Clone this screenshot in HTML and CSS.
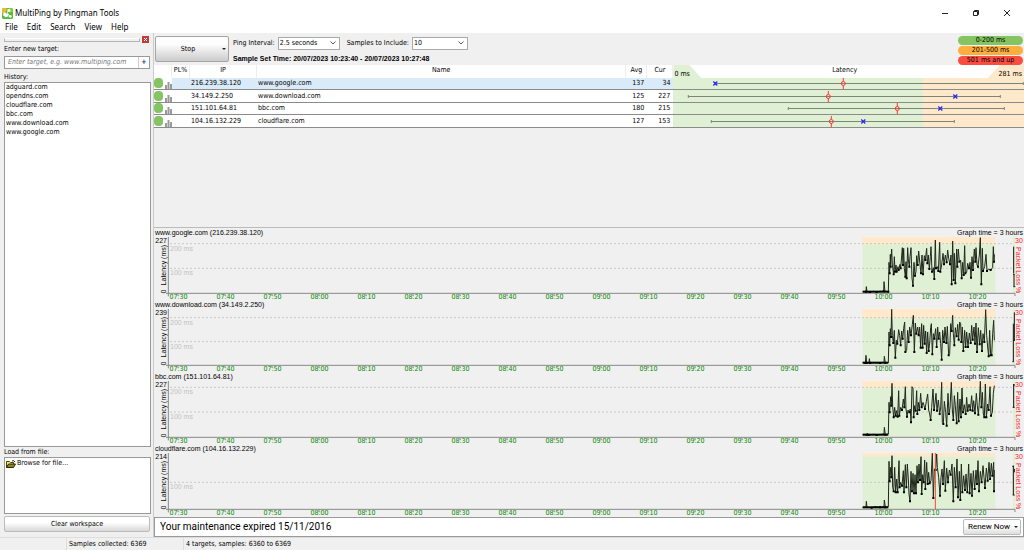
FILE: index.html
```html
<!DOCTYPE html>
<html lang="en">
<head>
<meta charset="utf-8">
<title>MultiPing by Pingman Tools</title>
<link rel="stylesheet" href="styles.css">
</head>
<body>
<div class="app">
  <header class="titlebar">
    <svg class="logo" viewBox="0 0 12 12">
      <rect x="0" y="0" width="12" height="12" rx="2" fill="#56bb3c"/>
      <path d="M0 2a2 2 0 0 1 2-2h3v3L2 6H0z" fill="#f2b632"/>
      <path d="M7 0h3a2 2 0 0 1 2 2v3H8z" fill="#7fd02f"/>
      <path d="M6 1h3v3H6zM1 8l1-3h2l1 2 2-1v3l-3 1z" fill="#fff"/>
      <path d="M4 9l2-4 1-2M6 6l3 3" fill="none" stroke="#fff"/>
      <circle cx="9" cy="9" r="1.500" fill="#fff"/>
    </svg>
    <h1 class="title">MultiPing by Pingman Tools</h1>
    <div class="window-buttons">
      <button aria-label="Minimize"><svg viewBox="0 0 8 8"><path d="M1 4.500h6"/></svg></button>
      <button aria-label="Restore"><svg viewBox="0 0 8 8"><path d="M1.500 2.500h4v4h-4zM2.500 2.500v-1h4v4h-1"/></svg></button>
      <button aria-label="Close"><svg viewBox="0 0 8 8"><path d="M1 1l6 6M7 1L1 7"/></svg></button>
    </div>
  </header>
  <nav class="menu">
    <button>File</button><button>Edit</button><button>Search</button><button>View</button><button>Help</button>
  </nav>

  <div class="body">
    <aside class="side">
      <div class="grip"><span class="grip-bar"></span><button class="grip-close" aria-label="Close panel"><svg viewBox="0 0 7 7"><path d="M2 2l3 3M5 2L2 5"/></svg></button></div>
      <label class="side-label" for="target">Enter new target:</label>
      <div class="target"><input id="target" type="text" placeholder="Enter target, e.g. www.multiping.com"><button aria-label="Add target">+</button></div>
      <h2 class="side-label history-label">History:</h2>
      <ul class="list history">
        <li>adguard.com</li><li>opendns.com</li><li>cloudflare.com</li><li>bbc.com</li><li>www.download.com</li><li>www.google.com</li>
      </ul>
      <h2 class="side-label">Load from file:</h2>
      <div class="list files">
        <button class="browse"><svg viewBox="0 0 10 8"><path d="M.5 7.500v-6h3l1 1h3v2" fill="#f3ea7a" stroke="#4a4300"/><path d="M.5 7.500l2-3.500h7l-2 3.500z" fill="#8c8420" stroke="#2c2800"/><path d="M6 1q2-1.200 3 1" fill="none" stroke="#222"/></svg>Browse for file...</button>
      </div>
      <button class="clear">Clear workspace</button>
    </aside>

    <main class="main">
      <section class="toolbar">
        <button class="stop"><span class="stop-text">Stop</span><span class="arrow"></span></button>
        <div class="settings">
          <div class="fields">
            <label for="interval">Ping Interval:</label>
            <span class="select interval"><select id="interval"><option>2.5 seconds</option></select><svg viewBox="0 0 6 4"><path d="M.5.5L3 3 5.500.5"/></svg></span>
            <label for="samples">Samples to Include:</label>
            <span class="select samples"><select id="samples"><option>10</option></select><svg viewBox="0 0 6 4"><path d="M.5.5L3 3 5.500.5"/></svg></span>
          </div>
          <p class="set-time">Sample Set Time: 20/07/2023 10:23:40 - 20/07/2023 10:27:48</p>
        </div>
        <ul class="legend"><li class="good">0-200 ms</li><li class="warn">201-500 ms</li><li class="bad">501 ms and up</li></ul>
      </section>

      <table class="targets">
        <colgroup><col class="c-icon"><col class="c-pl"><col class="c-ip"><col class="c-name"><col class="c-avg"><col class="c-cur"><col class="c-lat"></colgroup>
        <thead><tr><th></th><th>PL%</th><th>IP</th><th>Name</th><th>Avg</th><th>Cur</th>
          <th class="lat"><div class="lat-head"><span class="lat-min">0 ms</span><span>Latency</span><span class="lat-max">281 ms</span></div></th></tr></thead>
        <tbody id="rows"></tbody>
      </table>

      <div class="gap"></div>
      <section class="charts" id="charts"></section>

      <footer class="notice"><span>Your maintenance expired 15/11/2016</span><button class="renew">Renew Now<span class="arrow"></span></button></footer>
    </main>
  </div>
  <footer class="status"><span class="s1"></span><span class="s2">Samples collected: 6369</span><span class="s3">4 targets, samples: 6360 to 6369</span></footer>
</div>
<script src="app.js"></script>
</body>
</html>
```
FILE: styles.css
```css
* { box-sizing: border-box; margin: 0; padding: 0; }
body { font: 7px/9px "DejaVu Sans Condensed", "DejaVu Sans", sans-serif; color: #000; }
button, input, select { font: inherit; color: inherit; border: 0; background: none; }
ul { list-style: none; }
svg { display: block; }
.app { display: flex; flex-direction: column; height: 100vh; background: #f0f0f0; overflow: hidden; }

.titlebar { display: flex; align-items: center; height: 21px; padding: 5px 2px 0 2px; background: #fff; }
.logo { width: 11px; height: 11px; margin-right: 2px; }
.title { font: 8px/12px "Noto Sans", sans-serif; flex: 1; }
.window-buttons { display: flex; }
.window-buttons button { width: 31px; display: grid; place-items: center; }
.window-buttons svg { width: 8px; height: 8px; fill: none; stroke: #222; }
.menu { display: flex; gap: 9px; height: 12px; padding-left: 5px; background: #fff; font: 8px/12px "Noto Sans", sans-serif; }

.body { display: flex; flex: 1; min-height: 0; }
.side { width: 153px; padding: 3px 2px 5px 4px; display: flex; flex-direction: column; }
.grip { display: flex; align-items: center; justify-content: space-between; height: 7px; }
.grip-bar { width: 136px; height: 4px; border: 1px solid #b4b4b4; border-top-color: #fff; }
.grip-close { width: 7px; height: 7px; background: #c33c3c; margin-right: 2px; }
.grip-close svg { stroke: #fff; }
.side-label { font-size: 7px; font-weight: normal; line-height: 9px; margin-top: 1px; }
.side > label { margin-top: 2px; }
.target { display: flex; margin-top: 2px; height: 13px; background: #fff; border: 1px solid #999; width: 146px; }
.target input { flex: 1; min-width: 0; padding-left: 3px; font-style: italic; outline: 0; }
.target input::placeholder { color: #777; opacity: 1; }
.target button { width: 11px; border-left: 1px solid #ccc; color: #223a66; font-weight: bold; }
.history-label { margin-top: 4px; }
.list { background: #fff; border: 1px solid #999; width: 147px; padding: 0 1px; }
.history { flex: 1; line-height: 9px; }
.files { height: 57px; padding-top: 1px; }
.browse { display: flex; align-items: center; gap: 1px; height: 9px; }
.browse svg { width: 10px; height: 8px; }
.clear { width: 146px; height: 16px; margin-top: 2px; border: 1px solid #bbb; border-radius: 2px; background: linear-gradient(#fff 40%, #d8d8d8); }

.main { flex: 1; min-width: 0; display: flex; flex-direction: column; border-left: 1px solid #ccc; }
.toolbar { display: flex; height: 32px; padding: 3px 1px 0 1px; }
.stop { display: flex; align-items: center; width: 74px; height: 26px; border: 1px solid #a5a5a5; border-radius: 2px; background: linear-gradient(#fdfdfd 30%, #cbcbcb); }
.stop-text { flex: 1; }
.arrow { border: 2px solid transparent; border-top-color: #222; border-bottom: 0; margin: 0 2px; }
.settings { padding-left: 4px; flex: 1; }
.fields { display: flex; align-items: center; height: 14px; }
.select { display: flex; align-items: center; height: 13px; background: #fff; border: 1px solid #aaa; }
.select select { flex: 1; appearance: none; outline: 0; padding-left: 1px; }
.select svg { width: 6px; height: 4px; fill: none; stroke: #555; margin-right: 3px; }
.interval { width: 62px; margin: 0 7px 0 3px; }
.samples { width: 56px; margin-left: 3px; }
.set-time { font: bold 7px/9px "Liberation Sans", sans-serif; margin-top: 4px; }
.legend { width: 65px; display: grid; gap: 1px; text-align: center; align-content: start; }
.legend li { height: 9px; border-radius: 5px; }
.good { background: #84c561; }
.warn { background: #ffae3d; }
.bad { background: #f94d41; }

.targets { width: 100%; table-layout: fixed; border-collapse: separate; border-spacing: 0; background: #fff; }
.c-icon { width: 18px; } .c-pl { width: 18px; } .c-ip { width: 67px; } .c-avg { width: 21px; } .c-cur { width: 26px; } .c-lat { width: 40.300%; }
.targets th { font-weight: normal; height: 13px; line-height: 10px; vertical-align: top; border-right: 1px solid #eee; }
.targets .lat { border: 0; }
.lat-head { display: flex; justify-content: space-between; height: 13px; }
.lat-min, .lat-max { padding-top: 4px; width: 28px; }
.lat-min { background: #dff0d3; clip-path: polygon(0 0, 16px 0, 100% 100%, 0 100%); text-align: left; padding-left: 1px; }
.lat-max { background: #ffe9ca; width: 36px; text-align: right; padding-right: 2px; clip-path: polygon(12px 0, 100% 0, 100% 100%, 0 100%); }
.targets td { height: 12px; line-height: 11px; border-bottom: 1px solid #8b8b8b; white-space: nowrap; }
.targets tr:nth-child(even) td { height: 13px; }
.targets .num { text-align: right; padding-right: 3px; }
.targets .ip, .targets .name { padding-left: 1px; }
.selected td:not(:first-child) { background: #d9eaf8; }
.targets td.range, .targets .selected td.range { background: linear-gradient(90deg, #dff0d5 71.200%, #ffe9ca 71.200%); }
.range svg { width: 100%; height: 11px; }
.icons svg { width: 18px; height: 11px; }

.gap { flex: 1; }
.charts { border-top: 1px solid #bbb; height: 290px; padding: 1px 0 2px; display: flex; flex-direction: column; }
.chart { flex: 1; display: grid; grid-template: 8px 57px 1fr / 14px 1fr 9px; font-family: "Liberation Sans", sans-serif; }
.chart-head { grid-column: 1 / 4; display: flex; justify-content: space-between; line-height: 8px; padding: 0 1px; }
.axis-side { position: relative; }
.axis-side .max { position: absolute; top: 0; right: 1px; line-height: 7px; }
.y-axis { position: absolute; left: 6px; bottom: 1px; display: flex; gap: 4px; writing-mode: vertical-rl; transform: rotate(180deg); line-height: 7px; white-space: nowrap; }
.loss { color: #f22; }
.loss .pct { writing-mode: vertical-rl; line-height: 7px; margin-top: 3px; white-space: nowrap; }
.loss .cap { display: block; line-height: 7px; }
.plot { position: relative; }
.plot > svg { width: 100%; height: 57px; overflow: visible; }
.plot .tick-label { position: absolute; left: 2px; color: #c2c2c2; line-height: 8px; }
.plot path, .plot line { vector-effect: non-scaling-stroke; }
.times { grid-column: 2; display: flex; color: #008a00; font-family: "DejaVu Sans Condensed", sans-serif; line-height: 7px; padding-right: 14px; margin-left: -13px; }
.times span { flex: 1 1 0; text-align: center; }

.notice { display: flex; align-items: center; justify-content: space-between; height: 20px; background: #fff; border: 1px solid #999; padding: 0 2px 0 5px; font: 10px/14px Roboto, sans-serif; }
.renew { display: flex; align-items: center; justify-content: space-between; width: 58px; height: 16px; padding-left: 4px; font-size: 8px; white-space: nowrap; border: 1px solid #bbb; border-radius: 2px; background: linear-gradient(#fff 40%, #ddd); }
.status { display: flex; height: 13px; line-height: 12px; border-top: 1px solid #ddd; }
.status span { border-right: 1px solid #ddd; padding-left: 2px; }
.s1 { width: 67px; } .s2 { width: 117px; }
.status .s3 { border: 0; padding-left: 2px; }
```
FILE: app.js
```js
const targets = [
  { ip: "216.239.38.120", name: "www.google.com", avg: 137, cur: 34, range: [42, 350], mean: 170, last: 42 },
  { ip: "34.149.2.250", name: "www.download.com", avg: 125, cur: 227, range: [15, 327], mean: 155, last: 282 },
  { ip: "151.101.64.81", name: "bbc.com", avg: 180, cur: 215, range: [115, 331], mean: 224, last: 267 },
  { ip: "104.16.132.229", name: "cloudflare.com", avg: 127, cur: 153, range: [38, 281], mean: 158, last: 190 }
];

const icons = `<svg viewBox="0 0 18 11"><rect x="0" y="0" width="9" height="10" rx="4" fill="#84c561"/><path d="M12 11V7M14.500 11V4M17 11V6" stroke="#999" stroke-width="2"/></svg>`;

document.getElementById("rows").innerHTML = targets.map((t, i) => `
  <tr class="${i ? "" : "selected"}"><td class="icons">${icons}</td><td></td><td class="ip">${t.ip}</td><td class="name">${t.name}</td>
  <td class="num">${t.avg}</td><td class="num">${t.cur}</td>
  <td class="range"><svg viewBox="0 0 350 11" fill="none">
    <path d="M${t.range[0]} 5.500H${t.range[1]}M${t.range[0]} 4v3M${t.range[1]} 4v3" stroke="#7d8577"/>
    <path d="M${t.mean} 0v3.500M${t.mean} 7.500V11" stroke="#f33"/><circle cx="${t.mean}" cy="5.500" r="2" stroke="#f33"/>
    <path d="M${t.last - 2} 3.500l4 4m0-4l-4 4" stroke="#22f" stroke-width="1.200"/></svg></td></tr>`).join("");

/* Each trace is a list of x,y samples; dy moves it to the top of its plot. */
const charts = [
  { host: "www.google.com (216.239.38.120)", max: 227, g: [[20, 200], [94, 100]], dy: -36, band: 22, loss: "M491 65v80M489 148h5M492 148v36M490 185h6",
    d: "38,200 48,200 49,185 51,200 60,201 70,199 80,201 90,199 101,199 102,170 105,199 115,200 117,112 119,145 121,88 122,125 125,72 127,120 131,148 133,95 135,140 138,120 140,140 144,125 146,135 150,118 152,130 157,68 159,120 161,70 163,130 166,155 168,110 170,160 173,68 175,105 178,125 180,95 183,68 186,160 189,182 192,112 195,152 198,140 200,92 203,120 206,78 209,108 213,145 216,90 219,148 223,92 226,105 230,70 232,115 235,90 238,132 241,95 243,65 246,140 250,128 253,162 256,45 258,130 262,125 265,138 269,52 271,140 275,120 279,85 282,118 286,90 290,112 293,75 296,100 300,118 303,90 305,178 308,48 311,165 313,85 316,175 320,72 322,125 325,72 328,110 332,105 335,160 338,112 341,150 344,62 346,145 350,142 353,115 357,130 360,112 363,158 366,95 369,135 373,72 376,110 378,68 381,120 384,125 388,90 391,38 394,178 397,70 399,138 404,125 408,88 411,138 416,132 422,135 428,128 430,65 432,110 433,88" },
  { host: "www.download.com (34.149.2.250)", max: 239, g: [[26, 200], [98, 100]], dy: -26, band: 28, loss: "M493 36v84M489 120h6M490 70v112M487 184h5",
    d: "38,187 46,188 48,165 50,188 57,187 58,175 60,188 75,187 90,188 102,186 103,168 106,188 115,187 117,95 119,135 121,85 123,110 125,27 127,105 130,128 133,90 136,172 139,120 142,130 146,88 149,105 152,135 155,92 158,115 161,84 164,65 166,155 170,150 173,90 176,125 179,80 183,105 187,72 190,45 193,155 196,68 199,100 203,80 206,105 209,80 212,142 215,70 218,142 221,75 224,130 227,92 230,158 233,95 236,152 239,128 242,82 244,70 247,162 250,100 253,115 257,85 260,140 263,80 266,115 269,95 272,130 275,178 278,90 282,125 285,80 289,128 292,78 296,165 299,160 302,70 305,92 308,45 310,100 313,135 316,82 320,108 323,72 326,118 329,65 332,70 334,125 337,80 340,152 344,90 347,140 350,95 354,140 358,98 362,128 365,75 368,118 372,80 375,130 378,68 381,155 385,82 389,132 392,90 396,152 399,100 403,125 407,28 410,105 413,140 416,168 419,90 422,165 425,165 428,100 431,60 433,120" },
  { host: "bbc.com (151.101.64.81)", max: 227, g: [[19, 200], [93, 100]], dy: -31, band: 21, loss: "M491 40v70M489 43h6M488 110h6",
    d: "38,192 50,192 53,188 56,193 70,191 80,193 95,191 102,190 103,170 106,192 115,190 117,95 119,125 122,78 124,105 126,38 128,108 131,140 134,110 137,135 140,120 143,138 146,60 148,135 152,110 156,118 160,85 163,110 166,48 168,115 171,138 174,118 178,125 181,115 183,155 186,48 189,52 191,140 194,105 197,120 200,60 202,130 205,95 208,118 212,68 215,110 219,95 222,105 225,115 229,92 233,70 236,118 239,130 242,148 245,110 249,55 252,118 255,98 258,68 261,120 265,88 269,130 272,112 275,35 277,155 280,160 283,92 287,125 290,165 294,68 297,130 300,112 304,35 307,118 310,148 313,75 316,105 320,158 323,65 326,152 330,85 333,140 336,52 339,125 343,102 347,130 350,80 353,120 357,100 361,118 365,75 368,120 371,90 375,128 379,68 382,105 385,132 388,95 391,32 394,110 397,65 400,130 403,140 406,40 409,140 413,100 416,118 420,48 423,135 427,125 430,68 433,45" },
  { host: "cloudflare.com (104.16.132.229)", max: 214, g: [[88, 100]], dy: -37, band: 11, loss: "M490 75v88M487 77h5M488 163h6M493 85v10", red: 256,
    d: "38,200 48,199 49,182 51,200 65,201 75,198 90,200 102,198 103,178 106,200 115,198 117,62 119,122 122,80 124,110 126,45 128,140 131,152 134,80 137,155 140,115 143,155 147,60 149,140 152,125 156,135 160,90 162,155 166,72 169,140 172,70 175,115 177,160 180,182 183,92 186,152 189,98 192,158 195,102 198,158 201,75 204,125 207,70 210,118 213,48 215,160 218,102 221,125 224,58 226,145 230,65 233,130 236,95 239,128 243,120 247,38 250,172 253,85 257,88 260,40 262,80 266,110 270,165 273,110 276,85 279,130 283,60 286,150 290,82 294,125 298,88 302,102 306,70 310,182 313,80 317,140 321,55 324,170 328,92 331,178 334,70 337,155 341,105 345,148 348,100 352,155 356,70 359,158 363,98 366,165 370,90 374,145 378,88 381,130 384,60 387,152 391,92 395,125 399,75 402,110 405,142 409,82 413,120 417,65 420,115 424,68 427,105 431,65 432,152 433,88" }
];

const times = [];
for (let m = 450; m <= 620; m += 10) times.push(String(Math.floor(m / 60)).padStart(2, "0") + ":" + String(m % 60).padStart(2, "0"));

/* Square ticks sit on every local low of the trace. */
function lows(d) {
  const p = d.split(" ").map(s => s.split(",").map(Number));
  return p.filter((q, i) => i && i < p.length - 1 && q[1] >= p[i - 1][1] && q[1] >= p[i + 1][1])
    .map(q => `M${q[0] - 3} ${q[1]}h6`).join("");
}

document.getElementById("charts").innerHTML = charts.map(c => `
  <article class="chart">
    <div class="chart-head"><span>${c.host}</span><span>Graph time = 3 hours</span></div>
    <div class="axis-side"><span class="max">${c.max}</span><div class="y-axis"><span>0</span><span>Latency (ms)</span></div></div>
    <div class="plot">
      <svg viewBox="0 0 2541 171" preserveAspectRatio="none" fill="none">
        <rect x="2084" y="0" width="398" height="169" fill="#dff0d5"/><rect x="2084" y="0" width="398" height="${c.band}" fill="#ffe9ca"/>
        <rect x="2535" y="0" width="6" height="169" fill="#dff0d5"/>
        ${c.g.map(g => `<path d="M6 ${g[0]}H2532" stroke="#c8c8c8" stroke-dasharray="2 2"/>`).join("")}
        <path d="M1 0V178" stroke="#888"/><path d="M-6 169H2541V177" stroke="#888"/>
        <path d="${times.map((t, i) => `M${30 + i * 141} 169v8`).join("")}" stroke="#888"/>
        <g transform="translate(2046 ${c.dy})">
          <path d="M${c.d.replace(/ /g, "L")}" stroke="#20281c" stroke-width="1"/>
          <path d="${lows(c.d)}" stroke="#000" stroke-width="2"/>
          <path d="M38 ${c.d.split(/[, ]/)[1]}H115" stroke="#000" stroke-width="2"/>
          ${c.red ? `<path d="M${c.red} 37V206" stroke="#f43"/>` : ""}
          <path d="${c.loss}" stroke="#111"/>
        </g>
      </svg>
      ${c.g.map(g => `<span class="tick-label" style="top:${Math.round(g[0] / 3 + 1)}px">${g[1]} ms</span>`).join("")}
    </div>
    <div class="loss"><span class="cap">30</span><span class="pct">Packet Loss %</span></div>
    <div class="times">${times.map(t => `<span>${t}</span>`).join("")}</div>
  </article>`).join("");
```
